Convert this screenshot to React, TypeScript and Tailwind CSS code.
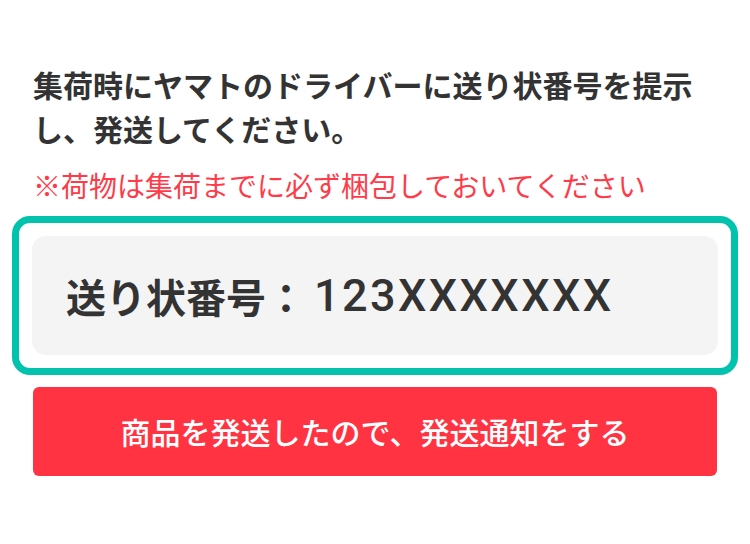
export default function App() {
  return (
    <div
      className="h-[544px] w-[750px] bg-white px-[33px] pt-[62px]"
      style={{ fontFamily: '"Noto Sans CJK JP", "Noto Sans", sans-serif' }}
    >
      <p className="text-[30px] font-bold leading-[44px] text-[#333333]">
        集荷時にヤマトのドライバーに送り状番号を提示し、発送してください。
      </p>
      <p className="mt-[14px] text-[28px] leading-[42px] text-[#ff3b4a]">
        ※荷物は集荷までに必ず梱包しておいてください
      </p>

      <div className="-mx-[21px] mt-[10px] rounded-[18px] border-[7px] border-[#00c2ad] p-[13px]">
        <div className="flex h-[119px] items-center rounded-[14px] bg-[#f4f4f4] pl-[34px] text-[#333333]">
          <span className="text-[40px] font-bold leading-none">送り状番号：</span>
          <span className="ml-[8px] font-['Roboto',sans-serif] text-[45px] font-medium leading-none tracking-[2.4px]">
            123XXXXXXX
          </span>
        </div>
      </div>

      <button
        type="button"
        className="mt-[12px] flex h-[89px] w-full items-center justify-center rounded-[6px] bg-[#ff3341] text-[30px] font-medium text-white"
      >
        商品を発送したので、発送通知をする
      </button>
    </div>
  )
}
